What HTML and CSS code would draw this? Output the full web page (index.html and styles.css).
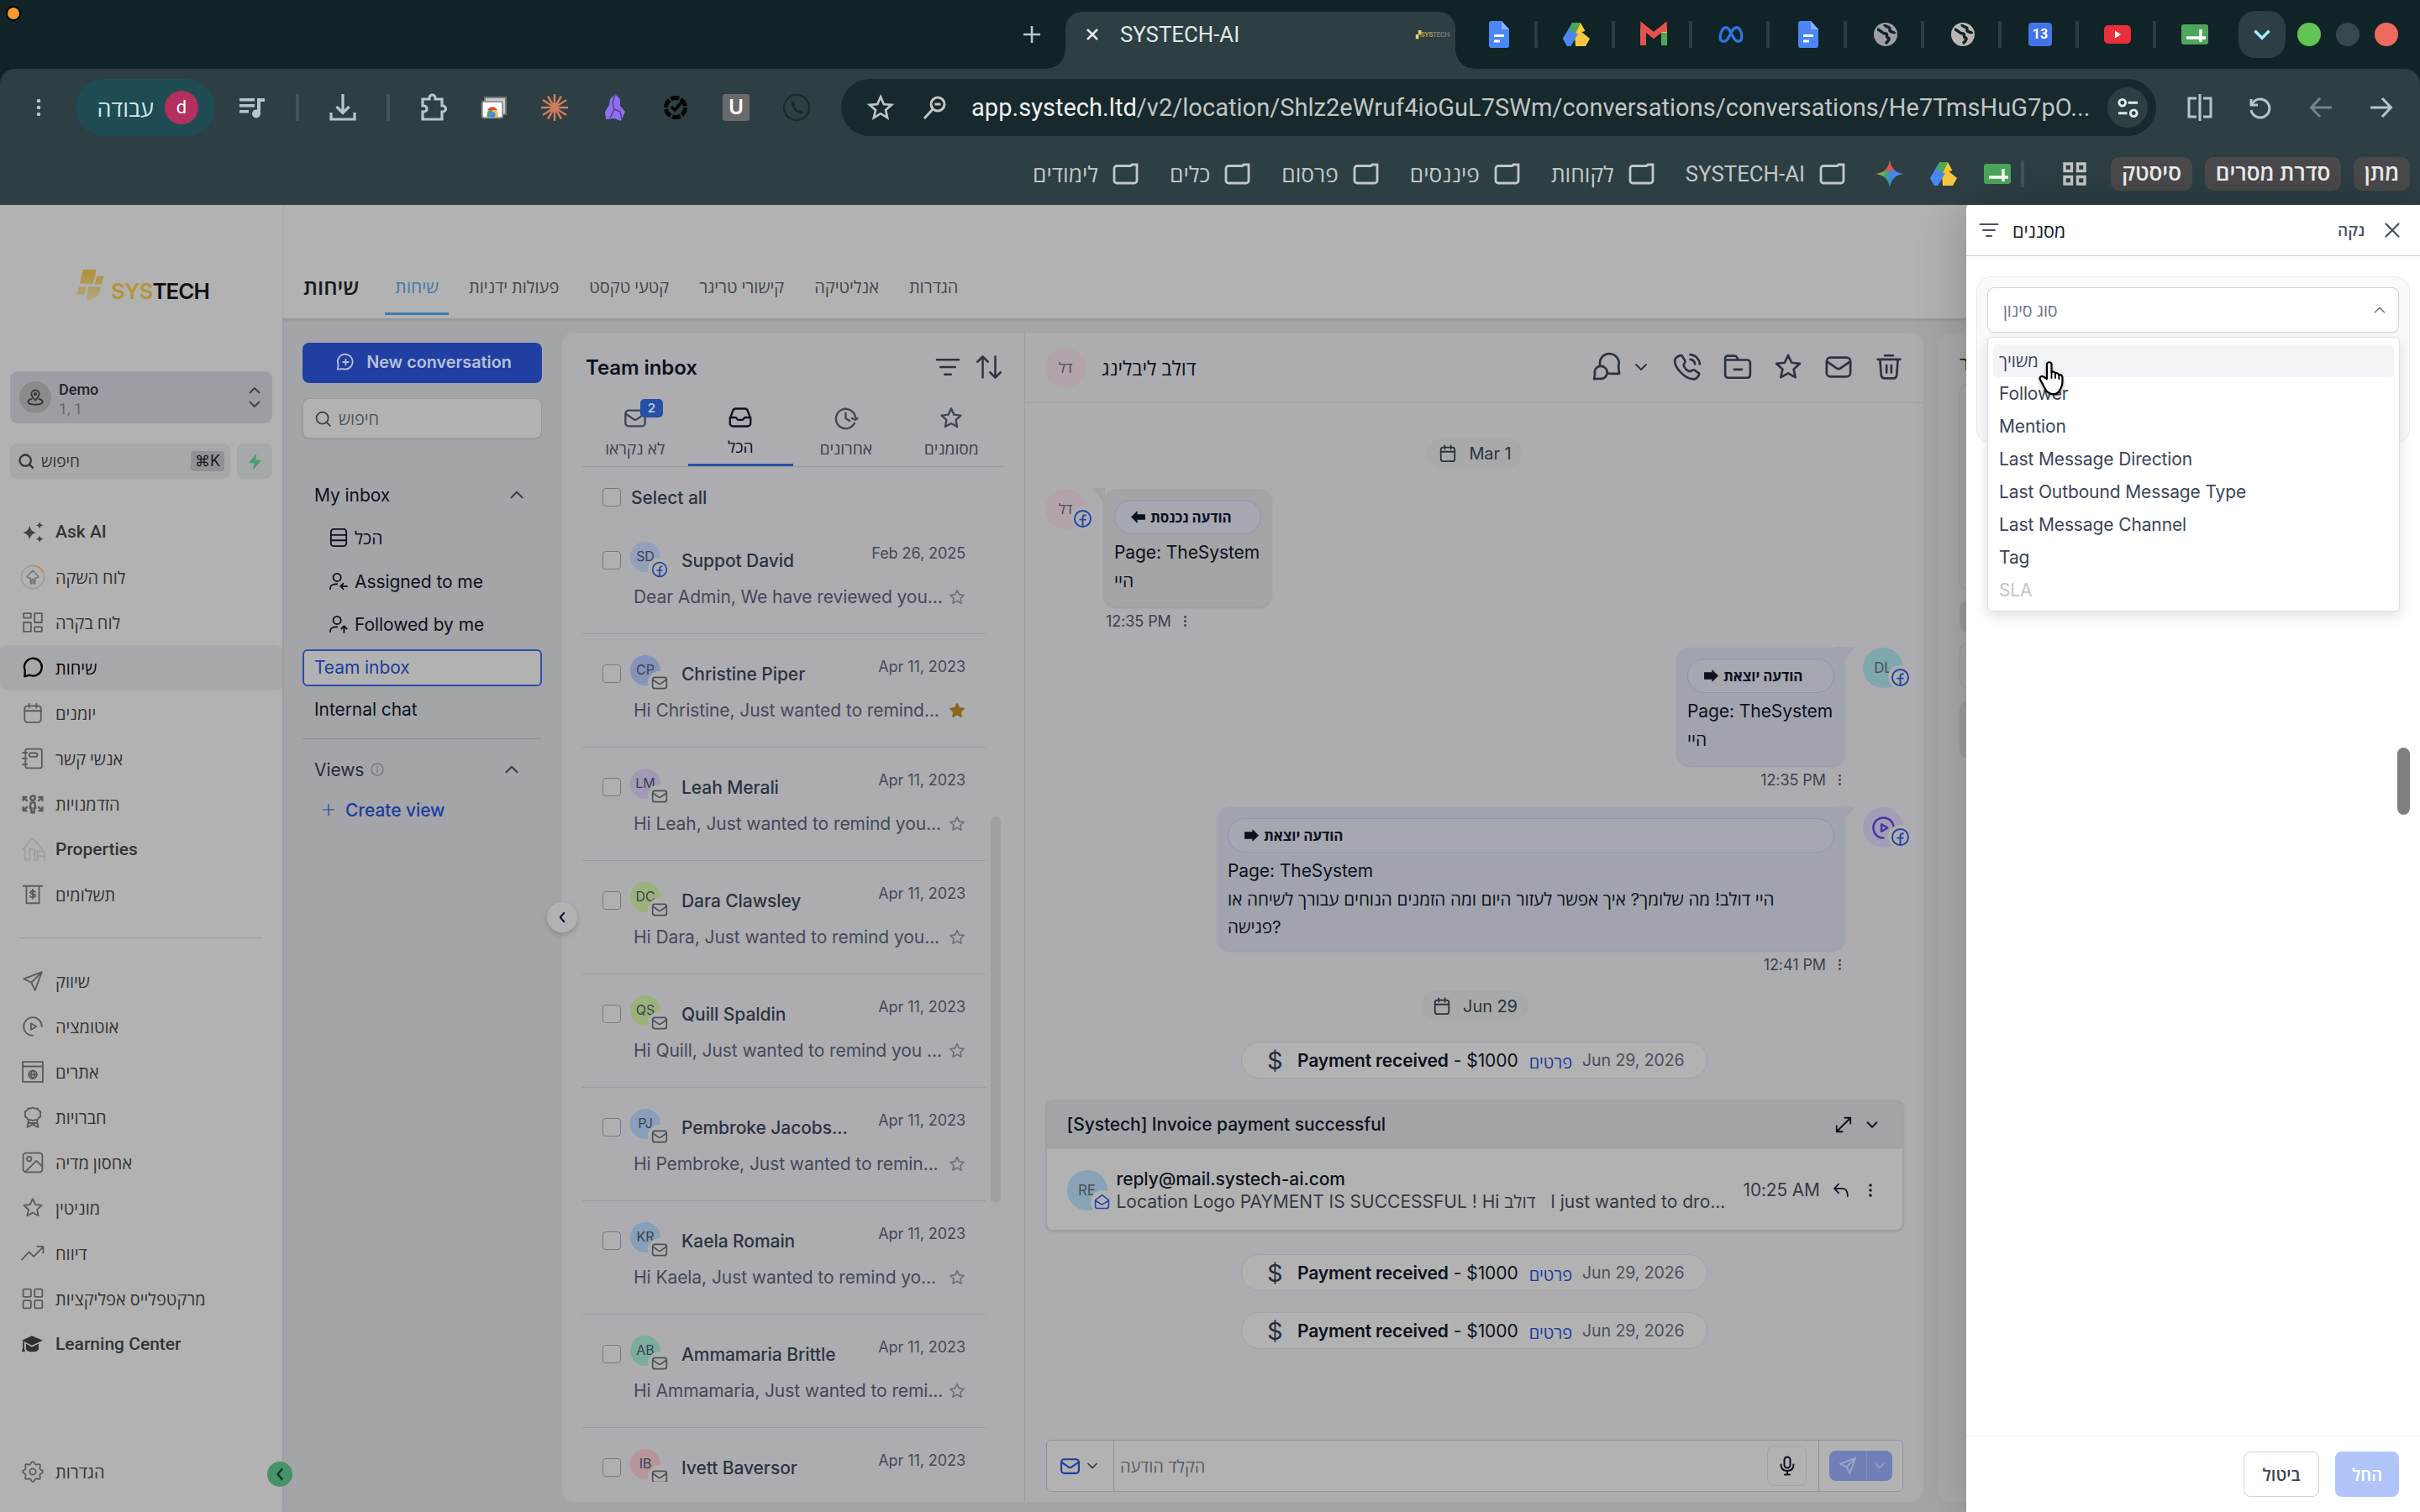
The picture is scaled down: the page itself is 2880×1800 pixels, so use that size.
FILE: index.html
```html
<!DOCTYPE html>
<html lang="he">
<head>
<meta charset="utf-8">
<title>SYSTECH-AI</title>
<link rel="stylesheet" href="styles.css">
</head>
<body>
<svg class="sprite" width="0" height="0">
  <defs>
    <linearGradient id="gold" x1="0" y1="0" x2="0" y2="1"><stop offset="0" stop-color="#b08f2f"/><stop offset="1" stop-color="#b2a987"/></linearGradient>
    <linearGradient id="gem" x1="0" y1="0" x2="1" y2="0"><stop offset="0" stop-color="#f2c230"/><stop offset=".35" stop-color="#3fa76a"/><stop offset=".6" stop-color="#4285f4"/><stop offset="1" stop-color="#4a8af4"/></linearGradient>
  </defs>
  <symbol id="i-mail" viewBox="0 0 24 24"><rect x="2" y="4" width="20" height="16" rx="3.2"/><path d="M2.5 7.5 10.4 13c1 .7 2.200.7 3.200 0L21.500 7.500"/></symbol>
  <symbol id="i-star" viewBox="0 0 24 24"><path d="M12 2l2.900 6.300 6.900.8-5.100 4.700 1.400 6.800L12 17.200l-6.100 3.400 1.400-6.800L2.200 9.100l6.900-.8z"/></symbol>
  <symbol id="i-down" viewBox="0 0 24 24"><path d="M6 9l6 6 6-6"/></symbol>
  <symbol id="i-up" viewBox="0 0 24 24"><path d="M6 15l6-6 6 6"/></symbol>
  <symbol id="i-left" viewBox="0 0 24 24"><path d="M15 5l-6 7 6 7"/></symbol>
  <symbol id="i-search" viewBox="0 0 24 24"><circle cx="11" cy="11" r="8"/><path d="M17 17l4.500 4.500"/></symbol>
  <symbol id="i-cal" viewBox="0 0 24 24"><rect x="3" y="4" width="18" height="18" rx="3"/><path d="M3 9.500h18M8 1.500V6M16 1.500V6"/></symbol>
  <symbol id="i-send" viewBox="0 0 24 24"><path d="M22 2 2 9.500l8.500 4L14.500 22zM22 2 10.500 13.500"/></symbol>
  <symbol id="i-filter" viewBox="0 0 24 24"><path d="M1.500 5h21M5 12h14M9 19h6"/></symbol>
  <symbol id="i-dots" viewBox="0 0 24 24"><g fill="currentColor" stroke="none"><circle cx="12" cy="4" r="2.300"/><circle cx="12" cy="12" r="2.300"/><circle cx="12" cy="20" r="2.300"/></g></symbol>
  <symbol id="i-fb" viewBox="0 0 24 24"><circle cx="12" cy="12" r="10"/><path d="M12 21.500V10.500c0-2 1-3 3.500-3M8.500 13.200h7"/></symbol>
  <symbol id="i-play" viewBox="0 0 24 24"><path d="M12 22a10 10 0 1 1 10-10"/><path d="M10 8.500v7l6-3.500z"/></symbol>
  <symbol id="i-chat" viewBox="0 0 24 24"><path d="M3 21.500l.6-6.300A9.600 9.600 0 1 1 8.500 20z"/></symbol>
  <symbol id="i-folder" viewBox="0 0 32 26"><path d="M5 3.500h13l3.500 0 1.500-1.500h6v19a3 3 0 0 1-3 3H5a3 3 0 0 1-3-3V6.500a3 3 0 0 1 3-3z"/></symbol>
  <symbol id="i-doc" viewBox="0 0 24 32"><path d="M3 0h12l9 10v19a3 3 0 0 1-3 3H3a3 3 0 0 1-3-3V3a3 3 0 0 1 3-3z" fill="#4c86f5"/><path d="M15 0l9 10h-9z" fill="#8ab4f8"/><path d="M6 17.500h12M6 24h7" stroke="#fff" stroke-width="3"/></symbol>
  <symbol id="i-drive" viewBox="0 0 32 28"><path d="M11 0h10l5.500 10-10.500 3-5 1z" fill="#fbc934"/><path d="M11 0h10l-4 9-6 5-3-4.500z" fill="#4caf50"/><path d="M11 0 0 19l5 9 11-17z" fill="#4c86f5"/><path d="M11 0h10L15 13 7.500 9z" fill="#4ba75a"/><path d="M21 10 32 19l-5 9H15l-1-12 5-8z" fill="#f7c744"/><path d="M10 13h8L9.500 28H5L0 19l3.500-6z" fill="#4c86f5"/></symbol>
  <symbol id="i-globe" viewBox="0 0 28 28"><circle cx="14" cy="14" r="14" fill="currentColor"/><path d="M4 8c4 0 5 5 10 5 3 0 0 4 3 5s-1 5-3 7M13 2c0 4 7 2 6 6s5 2 6 5" fill="none" stroke="#102327" stroke-width="3.500"/></symbol>
  <symbol id="i-sheet" viewBox="0 0 32 24"><rect width="32" height="24" rx="3" fill="#4da65c"/><path d="M6 16h23M23 6v15" stroke="#fff" stroke-width="3.400"/></symbol>
  <symbol id="i-in" viewBox="0 0 18 16"><path d="M0 8l8-8v4.500h10v7H8V16z" fill="currentColor" stroke="none"/></symbol>
  <symbol id="i-out" viewBox="0 0 18 16"><path d="M18 8l-8-8v3.500H0v9h10V16z" fill="currentColor" stroke="none"/></symbol>
</svg>

<header class="browser">
  <div class="tabstrip">
    <i class="rec"></i>
    <svg class="newtab" viewBox="0 0 24 24"><path d="M12 1v22M1 12h22"/></svg>
    <div class="tab"><svg viewBox="0 0 24 24"><path d="M4 4l16 16M20 4 4 20"/></svg><span>SYSTECH-AI</span><em><b>▞</b>SYS<u>TECH</u></em></div>
    <div class="pins">
      <div><svg class="doc"><use href="#i-doc"/></svg></div>
      <div><svg class="drv"><use href="#i-drive"/></svg></div>
      <div><svg class="gm" viewBox="0 0 32 25"><path d="M3.500 25V5" stroke="#4c86f5" stroke-width="7"/><path d="M28.500 25V5" stroke="#4ba75a" stroke-width="7"/><path d="M28.500 10V5" stroke="#f7c744" stroke-width="7"/><path d="M3.500 25V3L16 13 28.500 3v6" fill="none" stroke="#e8504a" stroke-width="6.500"/></svg></div>
      <div><svg class="meta" viewBox="0 0 34 24"><path d="M3 17C3 8 7 3 10.500 3 17 3 19 21 26 21c3 0 5-2 5-6C31 8 28 3 24 3 17 3 15 21 8 21c-3 0-5-1.500-5-4z" fill="none" stroke="#2f74e0" stroke-width="3.600"/></svg></div>
      <div><svg class="doc"><use href="#i-doc"/></svg></div>
      <div><svg class="glb g1"><use href="#i-globe"/></svg></div>
      <div><svg class="glb g2"><use href="#i-globe"/></svg></div>
      <div><b class="cal13">13</b></div>
      <div><svg class="yt" viewBox="0 0 32 22"><rect width="32" height="22" rx="5" fill="#e7303c"/><path d="M13 6.500v9l7-4.500z" fill="#fff"/></svg></div>
      <div><svg class="sht"><use href="#i-sheet"/></svg></div>
    </div>
    <div class="tabsearch"><svg><use href="#i-down"/></svg></div>
    <i class="light l1"></i><i class="light l2"></i><i class="light l3"></i>
  </div>
  <div class="toolbar">
    <svg class="menu"><use href="#i-dots"/></svg>
    <div class="profile"><span>עבודה</span><b>d</b></div>
    <div class="tools">
      <svg viewBox="0 0 32 32" class="f"><path d="M1 5h18v3.500H1zM1 12h18v3.500H1zM1 19h11v3.500H1zM22 5h9v4h-5v14a5 5 0 1 1-4-4.500z"/></svg>
      <i></i>
      <svg viewBox="0 0 32 32"><path d="M16 0v22M8.500 15l7.500 7.500 7.500-7.500M2 22v8h28v-8"/></svg>
      <i></i>
      <svg viewBox="0 0 32 32"><path d="M3 6h8V4.500a3.500 3.500 0 0 1 7 0V6h8v8h1a3.500 3.500 0 0 1 0 7h-1v9H3v-9h1.500a3.500 3.500 0 0 0 0-7H3z"/></svg>
      <svg viewBox="0 0 32 32"><rect x="5" y="4" width="25" height="20" fill="#c9c9c9" stroke="#777" stroke-width="2"/><rect x="2" y="9" width="24" height="19" rx="2" fill="#fff" stroke="#999" stroke-width="2"/><path d="M14 16v11H7.500c0-6 2-10 6.500-11z" fill="#4ba75a" stroke="none"/><path d="M14 16c5 0 7 5 7 11h-7z" fill="#f7c744" stroke="none"/><path d="M8 19c3-5 9-5 12 0z" fill="#de4b3e" stroke="none"/><circle cx="14" cy="24.500" r="3.500" fill="#4c86f5" stroke="none"/></svg>
      <svg viewBox="0 0 32 32"><path d="M16 0v32M0 16h32M8 2.500l16 27M24 2.500 8 29.500M2 7l28 18M30 7 2 25" stroke="#cf7d5d" stroke-width="2.500"/></svg>
      <svg viewBox="0 0 32 32"><path d="M16 0l6 6v8l6 7-5 11-8-3-10 1-1-9 5-8 1-7z" fill="#8f6ff0" stroke="none"/><path d="M16 1c-3 8-4 10-1 17l-5 10M15 18l7 3 2 9" stroke="#4e3f94" stroke-width="1.500"/></svg>
      <svg viewBox="0 0 32 32"><circle cx="16" cy="16" r="11.500" stroke="#050505" stroke-width="5" stroke-dasharray="10 2"/><path d="M11 15l4 4 8-9" stroke="#050505" stroke-width="3.500"/></svg>
      <b class="ubox">U</b>
      <svg viewBox="0 0 32 32"><circle cx="16" cy="16" r="15" stroke="#1b2628" stroke-width="2"/><path d="M11 8c-3 2 0 9 4 12.500s8 4 8.500 1.500l-3-3-3 1-4.500-6 1.500-3z" fill="#1b2628" stroke="none"/></svg>
    </div>
    <div class="omnibox">
      <svg viewBox="0 0 24 24" class="ob1"><path d="M12 2.500l2.800 6.500 7 .6-5.300 4.600 1.600 6.900L12 17.400l-6.100 3.700 1.600-6.900L2.200 9.600l7-.6z"/></svg>
      <svg viewBox="0 0 30 30" class="ob2"><circle cx="18" cy="11" r="8"/><path d="M12 17 2 28M14.500 11h7"/></svg>
      <span class="url"><b>app.systech.ltd</b>/v2/location/Shlz2eWruf4ioGuL7SWm/conversations/conversations/He7TmsHuG7pO...</span>
      <div class="site"><svg viewBox="0 0 28 28"><circle cx="7" cy="7.500" r="4"/><path d="M14 7.500h12M2 20.500h11"/><circle cx="21" cy="20.500" r="4"/></svg></div>
    </div>
    <div class="navs">
      <svg viewBox="0 0 32 32"><path d="M12 5H3v22h9M20 5h9v22h-9" stroke-width="3"/><path d="M16 0v32" stroke-width="3"/></svg>
      <svg viewBox="0 0 28 28"><path d="M3 4v7h8M4 10a11 11 0 1 1-1 7"/></svg>
      <svg viewBox="0 0 28 28" class="off"><path d="M27 14H3M13 3 2.500 14 13 25"/></svg>
      <svg viewBox="0 0 28 28"><path d="M1 14h24M15 3l10.500 11L15 25"/></svg>
    </div>
  </div>
  <div class="bookmarks">
    <div class="bm"><span>לימודים</span><svg><use href="#i-folder"/></svg></div>
    <div class="bm"><span>כלים</span><svg><use href="#i-folder"/></svg></div>
    <div class="bm"><span>פרסום</span><svg><use href="#i-folder"/></svg></div>
    <div class="bm"><span>פיננסים</span><svg><use href="#i-folder"/></svg></div>
    <div class="bm"><span>לקוחות</span><svg><use href="#i-folder"/></svg></div>
    <div class="bm en"><span>SYSTECH-AI</span><svg><use href="#i-folder"/></svg></div>
    <svg class="gemini" viewBox="0 0 32 32"><path d="M16 0c1.500 9 6.500 14.500 16 16-9.500 1.500-14.500 7-16 16C14.500 23 9.500 17.500 0 16 9.500 14.500 14.500 9 16 0z" fill="url(#gem)"/><path d="M16 0c1.200 7 4 11 8 13.500-6-2-10-2-16 0C12 11 14.800 7 16 0z" fill="#e8504a"/></svg>
    <svg class="drv"><use href="#i-drive"/></svg>
    <svg class="sht"><use href="#i-sheet"/></svg>
    <i class="sep"></i>
    <svg class="grid4" viewBox="0 0 28 28"><path d="M2 2h8.500v8.500H2zM17.500 2H26v8.500h-8.500zM2 17.500h8.500V26H2zM17.500 17.500H26V26h-8.500z"/></svg>
    <b class="chip c1">סיסטק</b><b class="chip c2">סדרת מסרים</b><b class="chip c3">מתן</b>
  </div>
</header>

<div class="app">
  <aside class="side">
    <div class="logo"><svg viewBox="0 0 34 40"><path d="M8 0h17l-4 18H4zM25 8h9l-3 11h-9zM3 21h9l-2 11H0zM14 21h17l-4 12-15 7z" fill="url(#gold)"/></svg><span><b>SYS</b>TECH</span></div>
    <div class="acct">
      <i><svg viewBox="0 0 24 24"><path d="M12 16c-3-3-5-5.500-5-8.300a5 5 0 0 1 10 0C17 10.500 15 13 12 16zM7 14c-3 1-4.500 2-4.500 3.500 0 2.500 4 4 9.500 4s9.500-1.500 9.500-4C21.500 16 20 15 17 14"/><circle cx="12" cy="7.700" r="1.300"/></svg></i>
      <div><b>Demo</b><span>1, 1</span></div>
      <svg class="updn" viewBox="0 0 16 28"><path d="M2.500 8.500 8 3l5.500 5.500M2.500 19.500 8 25l5.500-5.500"/></svg>
    </div>
    <div class="srow">
      <div class="sbox"><svg><use href="#i-search"/></svg><span>חיפוש</span><kbd>⌘K</kbd></div>
      <div class="bolt"><svg viewBox="0 0 24 24"><path d="M14 1 3 14h8l-1.500 9L21 10h-8z" fill="#45a06f"/></svg></div>
    </div>
    <nav class="menu1">
      <a class="en"><svg viewBox="0 0 24 24" class="fill"><path d="M8.500 5c1 5 3 6.800 7.500 8-4.500 1.200-6.500 3-7.500 8-1-5-3-6.800-7.500-8 4.500-1.200 6.500-3 7.500-8zM19.500 1c.5 2.500 1.500 3.500 4 4-2.500.5-3.500 1.500-4 4-.5-2.500-1.500-3.500-4-4 2.500-.5 3.500-1.500 4-4zM19.500 16c.5 2.500 1.500 3.500 4 4-2.500.5-3.500 1.500-4 4-.5-2.500-1.500-3.500-4-4 2.500-.5 3.500-1.500 4-4z"/></svg>Ask AI</a>
      <a><svg viewBox="0 0 28 28" class="ring"><circle cx="14" cy="14" r="12.700" stroke="#9a9b9e" stroke-width="1.500"/><path d="M14 1.300A12.700 12.700 0 0 1 25.500 8.500" stroke="#c08a60" stroke-width="1.800"/><path d="M14 6.500l6.500 7-2 1.500h-2v6.500H15v-5h-2v5h-1.500V15h-2l-2-1.500z" stroke="#77787b" stroke-width="1.500"/></svg>לוח השקה</a>
      <a><svg viewBox="0 0 24 24" class="sq"><path d="M2 2h8v5H2zM14 2h8v10h-8zM2 12h8v10H2zM14 17h8v5h-8z"/></svg>לוח בקרה</a>
      <a class="on"><svg><use href="#i-chat"/></svg>שיחות</a>
      <a><svg><use href="#i-cal"/></svg>יומנים</a>
      <a><svg viewBox="0 0 24 24"><rect x="4" y="1.500" width="18" height="21" rx="2"/><rect x="8" y="6" width="9" height="4" rx="2"/><path d="M1 5.500h4.500M1 12h4.500M1 18.500h4.500"/></svg>אנשי קשר</a>
      <a><svg viewBox="0 0 24 24" class="bold"><circle cx="12" cy="5.500" r="2.500"/><path d="M10 10.500h4l1 6h-1.500v5h-3v-5H9zM1.500 8V4.500H5M1.500 4.500l4 4M22.500 8V4.500H19M22.500 4.500l-4 4M1.500 16v3.500H5M1.500 19.500l4-4M22.500 16v3.500H19M22.500 19.500l-4-4"/></svg>הזדמנויות</a>
      <a class="en"><svg viewBox="0 0 24 24" class="faint"><path d="M1 12 11 1l10 11M3 10v13h5V12h5v11h3M16 23V14h7v9M16 19h7"/></svg>Properties</a>
      <a><svg viewBox="0 0 24 24"><path d="M1.500 2.500h21M5 2.500v19h14v-19" /><path d="M14.500 9c-.5-1.500-5-1.500-5 .6 0 2.400 5.200 1 5.200 3.600 0 2.300-5 2.300-5.500.4M12 6.500v10"/></svg>תשלומים</a>
    </nav>
    <hr>
    <nav class="menu1">
      <a><svg><use href="#i-send"/></svg>שיווק</a>
      <a><svg><use href="#i-play"/></svg>אוטומציה</a>
      <a><svg viewBox="0 0 24 24"><path d="M1 1h22v22H1zM1 6h22"/><circle cx="12" cy="15" r="4.500"/><path d="M7.500 15h9M12 10.500c-3 3-3 6 0 9 3-3 3-6 0-9"/></svg>אתרים</a>
      <a><svg viewBox="0 0 24 24"><path d="M12 1.500l2.500 1 2.600-.2 1.300 2.300 2.200 1.500-.4 2.600.4 2.600-2.200 1.500-1.300 2.300-2.600-.2-2.500 1-2.500-1-2.600.2-1.300-2.300-2.200-1.500.4-2.600-.4-2.600 2.200-1.500 1.300-2.300 2.600.2z"/><path d="M7.500 15l-1.500 8 6-3 6 3-1.500-8M8 18.500h8"/></svg>חברויות</a>
      <a><svg viewBox="0 0 24 24"><rect x="1.500" y="1.500" width="21" height="21" rx="3"/><circle cx="8" cy="8" r="2.500"/><path d="M4 22l12-12 6.500 6.500"/></svg>אחסון מדיה</a>
      <a><svg><use href="#i-star"/></svg>מוניטין</a>
      <a><svg viewBox="0 0 24 24"><path d="M0 19l8-8.500 5 5L23.500 5M17 4.500h6.500v7"/></svg>דיווח</a>
      <a><svg viewBox="0 0 24 24"><rect x="1.500" y="1.500" width="8.500" height="8.500" rx="1.500"/><rect x="14" y="1.500" width="8.500" height="8.500" rx="1.500"/><rect x="1.500" y="14" width="8.500" height="8.500" rx="1.500"/><rect x="14" y="14" width="8.500" height="8.500" rx="1.500"/></svg>מרקטפלייס אפליקציות</a>
      <a class="en"><svg viewBox="0 0 24 24" class="fill dark"><path d="M11 3 0 8l11 5.500L23 8zM4.500 11.500V18c2 3.500 12 3.500 14 0v-6.500L11 15.500zM1 8.500h1.700L2.500 16l1 4.500H0L1 16z"/></svg>Learning Center</a>
    </nav>
    <nav class="menu1 last">
      <a><svg viewBox="0 0 24 24"><circle cx="12" cy="12" r="3.300"/><path d="M12 1c2 0 1.700 2.600 3.200 3.200S18.400 3 19.800 4.200s-.6 3-.1 4.500S23 10 23 12s-2.600 1.700-3.200 3.200 1.200 3.200 0 4.600-3-.6-4.500-.1S14 23 12 23s-1.700-2.600-3.200-3.200-3.200 1.200-4.600 0 .6-3 .1-4.500S1 14 1 12s2.600-1.700 3.200-3.200S3 5.600 4.200 4.200s3 .6 4.500.1S10 1 12 1z"/></svg>הגדרות</a>
    </nav>
    <div class="fold"><svg><use href="#i-left"/></svg></div>
  </aside>

  <main class="main">
    <div class="top"><h1>שיחות</h1><a class="on">שיחות</a><a>פעולות ידניות</a><a>קטעי טקסט</a><a>קישורי טריגר</a><a>אנליטיקה</a><a>הגדרות</a></div>
    <div class="cols">
      <section class="boxes">
        <button class="newc"><svg viewBox="0 0 24 24"><path d="M2 21.500l.8-6A9.700 9.700 0 1 1 8.500 20.800zM12.500 8.500v7M9 12h7"/></svg>New conversation</button>
        <div class="find"><svg><use href="#i-search"/></svg>חיפוש</div>
        <div class="grp">My inbox<svg><use href="#i-up"/></svg></div>
        <a class="sub heb"><svg viewBox="0 0 24 24"><rect x="2" y="1" width="20" height="22" rx="3.500"/><path d="M2 8.500h20M2 15.500h20"/></svg>הכל</a>
        <a class="sub"><svg viewBox="0 0 24 24"><circle cx="10" cy="7" r="5"/><path d="M1 22c0-5 2.500-6.500 9-6.500M23 18.500h-8M18 15l-3.500 3.500L18 22"/></svg>Assigned to me</a>
        <a class="sub"><svg viewBox="0 0 24 24"><circle cx="10" cy="7" r="5"/><path d="M1 22c0-5 2.500-6.500 9-6.500M19 23v-8M15.500 18l3.500-3.500 3.500 3.500"/></svg>Followed by me</a>
        <a class="team">Team inbox</a>
        <a class="internal">Internal chat</a>
        <hr>
        <div class="grp views">Views<svg class="info" viewBox="0 0 24 24"><circle cx="12" cy="12" r="10.500"/><path d="M12 11v6M12 7v1.500"/></svg><svg><use href="#i-up"/></svg></div>
        <a class="create"><svg viewBox="0 0 24 24"><path d="M12 1v22M1 12h22"/></svg>Create view</a>
      </section>

      <section class="list">
        <div class="lhead"><h2>Team inbox</h2><svg><use href="#i-filter"/></svg><svg viewBox="0 0 24 24"><path d="M6 22V2M1 7l5-5 5 5M18 2v20M13 17l5 5 5-5"/></svg></div>
        <div class="ltabs">
          <div><svg><use href="#i-mail"/></svg><b>2</b><span>לא נקראו</span></div>
          <div class="on"><svg viewBox="0 0 24 24"><path d="M1.500 13 4.500 5a3 3 0 0 1 3-2h9a3 3 0 0 1 3 2l3 8v5a3 3 0 0 1-3 3h-15a3 3 0 0 1-3-3zM1.500 12h5.500c1.500 0 1.500 2.500 3 2.500h4c1.500 0 1.500-2.500 3-2.500h5.500"/></svg><span>הכל</span></div>
          <div><svg viewBox="0 0 24 24"><path d="M20.500 17A10 10 0 1 1 21.500 11M18 12l3.200 1.500L23.500 12M11.500 6.500V12l4 2.500"/></svg><span>אחרונים</span></div>
          <div><svg><use href="#i-star"/></svg><span>מסומנים</span></div>
        </div>
        <div class="rows">
          <div class="all"><i class="cb"></i><span>Select all</span></div>
          <div class="row"><i class="cb"></i><div class="av a1">SD<em class="fb"><svg><use href="#i-fb"/></svg></em></div><b>Suppot David</b><time>Feb 26, 2025</time><p>Dear Admin, We have reviewed you...</p><svg class="st"><use href="#i-star"/></svg></div>
          <div class="row"><i class="cb"></i><div class="av a2">CP<em><svg><use href="#i-mail"/></svg></em></div><b>Christine Piper</b><time>Apr 11, 2023</time><p>Hi Christine, Just wanted to remind...</p><svg class="st full"><use href="#i-star"/></svg></div>
          <div class="row"><i class="cb"></i><div class="av a3">LM<em><svg><use href="#i-mail"/></svg></em></div><b>Leah Merali</b><time>Apr 11, 2023</time><p>Hi Leah, Just wanted to remind you...</p><svg class="st"><use href="#i-star"/></svg></div>
          <div class="row"><i class="cb"></i><div class="av a4">DC<em><svg><use href="#i-mail"/></svg></em></div><b>Dara Clawsley</b><time>Apr 11, 2023</time><p>Hi Dara, Just wanted to remind you...</p><svg class="st"><use href="#i-star"/></svg></div>
          <div class="row"><i class="cb"></i><div class="av a4">QS<em><svg><use href="#i-mail"/></svg></em></div><b>Quill Spaldin</b><time>Apr 11, 2023</time><p>Hi Quill, Just wanted to remind you ...</p><svg class="st"><use href="#i-star"/></svg></div>
          <div class="row"><i class="cb"></i><div class="av a5">PJ<em><svg><use href="#i-mail"/></svg></em></div><b>Pembroke Jacobs...</b><time>Apr 11, 2023</time><p>Hi Pembroke, Just wanted to remin...</p><svg class="st"><use href="#i-star"/></svg></div>
          <div class="row"><i class="cb"></i><div class="av a5">KR<em><svg><use href="#i-mail"/></svg></em></div><b>Kaela Romain</b><time>Apr 11, 2023</time><p>Hi Kaela, Just wanted to remind yo...</p><svg class="st"><use href="#i-star"/></svg></div>
          <div class="row"><i class="cb"></i><div class="av a6">AB<em><svg><use href="#i-mail"/></svg></em></div><b>Ammamaria Brittle</b><time>Apr 11, 2023</time><p>Hi Ammamaria, Just wanted to remi...</p><svg class="st"><use href="#i-star"/></svg></div>
          <div class="row"><i class="cb"></i><div class="av a7">IB<em><svg><use href="#i-mail"/></svg></em></div><b>Ivett Baversor</b><time>Apr 11, 2023</time></div>
          <i class="thumb"></i>
        </div>
        <div class="collapse"><svg><use href="#i-left"/></svg></div>
      </section>

      <section class="chat">
        <div class="chead">
          <div class="cav">דל</div><h3>דולב ליבלינג</h3>
          <div class="acts">
            <svg viewBox="0 0 24 24"><path d="M6.500 10.500a8 8 0 1 1 15.500.5c0 2 .2 4 .7 6.500H16l-3-.2"/><path d="M1.500 22l.6-4a5.300 5.300 0 1 1 4 3.700z"/></svg>
            <svg class="sm"><use href="#i-down"/></svg>
            <svg viewBox="0 0 24 24"><path d="M14.500 1.500c4.500.4 7.500 3.500 8 8M14.500 5.500c2.300.3 3.700 1.700 4 4M7.600 2.600l2.600 4.200c.6 1-1.500 2.800-1.200 3.800.8 2.500 2.500 4.200 5 5 1 .3 2.800-1.800 3.800-1.200l4 2.800c1 .8-1.800 5-4.500 5C10 22 1.500 13 1.500 6.500c0-2.700 5-5.200 6.100-3.900z"/></svg>
            <svg viewBox="0 0 24 24"><path d="M1.500 6V4.500a2 2 0 0 1 2-2h6c1 0 1.500.5 2 1.500l1 2h7.500a2.500 2.500 0 0 1 2.500 2.500v10a2.500 2.500 0 0 1-2.500 2.500h-16a2.500 2.500 0 0 1-2.500-2.500V6h11M9 14h6.500"/></svg>
            <svg><use href="#i-star"/></svg>
            <svg class="ml"><use href="#i-mail"/></svg>
            <svg viewBox="0 0 24 24"><path d="M2.500 5.500h19M8.500 2.300h7M4.500 5.500l1 13.500a3 3 0 0 0 3 2.500h7a3 3 0 0 0 3-2.500l1-13.500M10 10.500v6M14 10.500v6"/></svg>
          </div>
        </div>
        <div class="feed">
          <div class="day d1"><svg><use href="#i-cal"/></svg>Mar 1</div>
          <div class="msg in">
            <div class="cav">דל<em><svg><use href="#i-fb"/></svg></em></div>
            <div class="wrap"><div class="bub"><div class="pill"><svg><use href="#i-in"/></svg>הודעה נכנסת</div><p>Page: TheSystem</p><p class="h">היי</p></div><div class="tm">12:35 PM<svg><use href="#i-dots"/></svg></div></div>
          </div>
          <div class="msg out m2">
            <div class="wrap"><div class="bub"><div class="pill"><svg><use href="#i-out"/></svg>הודעה יוצאת</div><p>Page: TheSystem</p><p class="h">היי</p></div><div class="tm">12:35 PM<svg><use href="#i-dots"/></svg></div></div>
            <div class="cav dl">DL<em><svg><use href="#i-fb"/></svg></em></div>
          </div>
          <div class="msg out m3">
            <div class="wrap"><div class="bub"><div class="pill"><svg><use href="#i-out"/></svg>הודעה יוצאת</div><p>Page: TheSystem</p><p class="h long">היי דולב! מה שלומך? איך אפשר לעזור היום ומה הזמנים הנוחים עבורך לשיחה או<br>פגישה?</p></div><div class="tm">12:41 PM<svg><use href="#i-dots"/></svg></div></div>
            <div class="cav bot"><svg><use href="#i-play"/></svg><em><svg><use href="#i-fb"/></svg></em></div>
          </div>
          <div class="day d2"><svg><use href="#i-cal"/></svg>Jun 29</div>
          <div class="pay p1"><i>$</i><b>Payment received</b> <span>- $1000</span><a>פרטים</a><time>Jun 29, 2026</time></div>
          <div class="mailcard">
            <div class="mh"><b>[Systech] Invoice payment successful</b><svg viewBox="0 0 24 24"><path d="M3 21 21 3M13.500 3H21v7.500M3 13.500V21h7.500"/></svg><svg><use href="#i-down"/></svg></div>
            <div class="mb"><div class="cav re">RE<em><svg viewBox="0 0 24 24"><path d="M2 9.500 12 2l10 7.500V19a3 3 0 0 1-3 3H5a3 3 0 0 1-3-3zM3 11l9 5.500 9-5.500"/></svg></em></div><div class="mt"><b>reply@mail.systech-ai.com</b><span>Location Logo PAYMENT IS SUCCESSFUL ! Hi דולב &nbsp; I just wanted to dro...</span></div><time>10:25 AM</time><svg class="rp" viewBox="0 0 24 24"><path d="M8.500 3 2.500 9.500l6 6.500M2.500 9.500H14c5 0 7.500 3 7.500 11.500"/></svg><svg class="dt"><use href="#i-dots"/></svg></div>
          </div>
          <div class="pay p2"><i>$</i><b>Payment received</b> <span>- $1000</span><a>פרטים</a><time>Jun 29, 2026</time></div>
          <div class="pay p3"><i>$</i><b>Payment received</b> <span>- $1000</span><a>פרטים</a><time>Jun 29, 2026</time></div>
        </div>
        <div class="composer">
          <div class="ch"><svg><use href="#i-mail"/></svg><svg class="sm"><use href="#i-down"/></svg></div>
          <span>הקלד הודעה</span>
          <div class="mic"><svg viewBox="0 0 24 24"><rect x="8.500" y="1.500" width="7" height="13" rx="3.500"/><path d="M4.500 10.500c0 5 3 7.500 7.500 7.500s7.500-2.500 7.500-7.500M12 18v4M9 22.500h6"/></svg></div>
          <div class="sendw"><div class="send"><svg><use href="#i-send"/></svg><div class="more"><svg class="sm"><use href="#i-down"/></svg></div></div></div>
        </div>
      </section>

      <section class="detail"><h4>ר</h4><i class="k1"></i><i class="k2"></i><i class="k3"></i><i class="k4"></i></section>
    </div>
  </main>

  <aside class="drawer">
    <div class="dh"><svg><use href="#i-filter"/></svg><h3>מסננים</h3><a>נקה</a><svg class="x" viewBox="0 0 24 24"><path d="M2 2l20 20M22 2 2 22"/></svg></div>
    <div class="fcard">
      <div class="sel"><span>סוג סינון</span><svg><use href="#i-up"/></svg></div>
      <ul class="drop"><li class="hov heb">משויך</li><li>Follower</li><li>Mention</li><li>Last Message Direction</li><li>Last Outbound Message Type</li><li>Last Message Channel</li><li>Tag</li><li class="dis">SLA</li></ul>
    </div>
    <i class="dthumb"></i>
    <div class="df"><button>ביטול</button><button class="pri">החל</button></div>
    <svg class="cursor" viewBox="0 0 30 42"><path d="M10 22V4.500a2.800 2.800 0 0 1 5.500 0V14c2-1 4 0 4.500 1.500 2-.8 3.700.2 4.300 1.700 2-.5 4.200.8 4.200 3.500 0 7 0 9-2.500 13.500-2 4.500-4 6-8 6-5 0-8-2-10.500-7L1.800 22.500c-1-3 2.700-5 4.700-2.500z" fill="#fff" stroke="#000" stroke-width="2.200"/><path d="M15.500 14v7M20 16v5M24.300 18v4" stroke="#000" stroke-width="1.800" fill="none"/></svg>
  </aside>
</div>
</body>
</html>
```
FILE: styles.css
```css
*{box-sizing:border-box}
body{margin:0;width:2880px;height:1800px;overflow:hidden;font-family:Inter,"Open Sans",sans-serif;font-size:21px;letter-spacing:-.07px;color:#0d1220;background:#b2b2b2}
svg{display:block;flex:none;fill:none;stroke:currentColor;stroke-width:2;stroke-linecap:round;stroke-linejoin:round;overflow:visible}
.sprite{position:absolute}
h1,h2,h3,h4,p,ul{margin:0;padding:0;font-weight:500}
i,em{font-style:normal}
a{color:inherit}
button{font:inherit;border:0;padding:0}

/* browser chrome */
.browser{height:244px;background:#102327;border-bottom:2px solid #3d4345;color:#c3c8c8;font-family:Roboto,"Open Sans",sans-serif;letter-spacing:0}
.browser svg{stroke-linecap:butt;stroke-linejoin:miter}
.tabstrip{height:82px;display:flex;align-items:center;position:relative}
.rec{width:14px;height:14px;border-radius:50%;background:#f39b2d;box-shadow:0 0 0 2px #000;position:absolute;left:9px;top:9px}
.newtab{width:22px;height:22px;margin-left:1217px;color:#b6c9cc;stroke-width:2.8}
.tab{margin-left:29px;align-self:flex-end;width:464px;height:68px;background:#2d3f43;border-radius:20px 20px 0 0;display:flex;align-items:center;padding:0 14px 14px 23px;position:relative;color:#e3e7e7}
.tab:before,.tab:after{content:"";position:absolute;bottom:0;width:22px;height:22px;background:radial-gradient(circle at 0 0,transparent 21px,#2d3f43 22px)}
.tab:before{left:-22px}
.tab:after{right:-22px;transform:scaleX(-1)}
.tab svg{width:18px;height:18px;stroke-width:3.4}
.tab span{margin-left:24px;font-size:25.800px}
.tab em{margin-left:auto;font:700 8px Inter;color:#b89a3c;width:33px;white-space:nowrap;letter-spacing:-.6px}
.tab em b{color:#e8cf79}
.tab em u{color:#777;text-decoration:none}
.pins{display:flex;margin-left:6px}
.pins div{width:92px;height:32px;display:flex;align-items:center;justify-content:center;border-right:4px solid #2c3d41;padding-left:4px}
.pins div:last-child{border-color:transparent}
.doc{width:24px;height:32px;stroke:none}.drv{width:32px;height:28px;stroke:none}.gm{width:32px;height:25px}.meta{width:34px;height:22px}.glb{width:28px;height:28px;stroke:none}.g1{color:#9d9ea6}.g2{color:#b9b7b3}.yt{width:32px;height:22px;stroke:none}.sht{width:32px;height:24px;stroke:none}
.cal13{width:28px;height:28px;border-radius:4px;background:#4374e8;color:#fff;font-size:16px;line-height:28px;text-align:center}
.tabsearch{width:56px;height:56px;border-radius:20px;background:#2d3f43;color:#a0eefc;display:flex;align-items:center;justify-content:center;margin-left:6px}
.tabsearch svg{width:34px;height:34px;stroke-width:2.4}
.light{width:28px;height:28px;border-radius:50%;margin-left:14px}
.light+.light{margin-left:18px}
.l1{background:#61c454}.l2{background:#36484c}.l3{background:#ed6a5f}
.toolbar{height:90px;background:#2d3f43;border-radius:18px 18px 0 0;display:flex;align-items:center;padding-top:2px;color:#b3c8cb}
.menu{width:24px;height:24px;margin-left:34px}
.profile{margin-left:32px;width:166px;height:68px;border-radius:34px;background:#1f4c53;display:flex;align-items:center;justify-content:flex-end;padding-right:20px;gap:13px;color:#cfe8ec;font-size:27px}
.profile b{width:40px;height:40px;border-radius:50%;background:#b3305e;color:#fff;text-align:center;font-weight:400;line-height:40px;font-size:22px}
.tools{display:flex;align-items:center;margin-left:28px;gap:40px}
.tools svg{width:32px;height:32px;stroke-width:3.2}
.tools .f{fill:currentColor;stroke:none}
.tools i{width:4px;height:32px;background:#41555a;margin:0 -4px}
.tools .ubox{width:32px;height:32px;background:#6a6a6a;color:#fff;text-align:center;font:600 24px/32px Inter;border-radius:3px}
.omnibox{margin-left:37px;width:1565px;height:68px;border-radius:34px;background:#17292c;display:flex;align-items:center;color:#c1c5c4}
.ob1{width:32px;height:32px;margin-left:31px;stroke-width:2}
.ob2{width:30px;height:30px;margin-left:34px;stroke-width:3}
.url{margin-left:28px;width:1331px;font-size:29px;letter-spacing:.04px;white-space:nowrap}
.url b{font-weight:400;color:#eef0f0}
.site{width:48px;height:48px;border-radius:50%;background:#2d3f43;margin-left:21px;display:flex;align-items:center;justify-content:center;color:#e3e7e7}
.site svg{width:27px;height:27px;stroke-width:3}
.navs{display:flex;margin-left:36px;gap:44px;align-items:center}
.navs svg{width:28px;height:28px;stroke-width:3}
.navs svg:first-child{width:32px;height:32px;margin-right:-2px}
.navs .off{color:#71858a}
.bookmarks{height:70px;background:#2d3f43;display:flex;align-items:center;justify-content:flex-end;padding-right:12px;color:#c3c6c6;font-size:26.300px}
.bm{display:flex;align-items:center;gap:17px;margin-right:36px}
.bm.en{font-size:25.800px}
.bm svg{width:32px;height:26px;stroke-width:2.800}
.gemini{width:32px;height:32px;stroke:none;margin-left:0}
.bookmarks .drv{margin-left:32px}.bookmarks .sht{margin-left:32px}
.sep{width:4px;height:32px;background:#41555a;margin-left:12px}
.grid4{width:28px;height:28px;margin:0 29px 0 46px;stroke-width:3.4}
.chip{height:40px;border-radius:10px;background:#4a4a4c;color:#eee;text-align:center;line-height:38px;font-weight:600;font-size:26px;margin-left:15px}
.c1{width:97px;margin-left:0}.c2{width:162px}.c3{width:67px}

/* sidebar */
.app{display:flex;height:1556px;position:relative}
.side{width:336px;flex:none;background:#b2b2b2;position:relative;font-family:Roboto,"Open Sans",sans-serif;font-size:21px;letter-spacing:0;color:#333536;z-index:2;box-shadow:0 0 4px rgba(0,0,0,.12)}
.logo{height:198px;padding:6px 0 0 91px;display:flex;align-items:center;color:#101010;font:600 26px Inter;letter-spacing:-1px}
.logo svg{width:33px;height:40px;stroke:#b2b2b2;stroke-width:1;margin:-12px 8px 0 0}
.logo b{color:#b4943a;font-weight:600}
.acct{margin:0 12px;height:62px;border-radius:9px;background:#9d9ea3;display:flex;align-items:center;padding:0 12px 0 11px}
.acct i{width:38px;height:38px;border-radius:50%;background:#8a8b8d;display:flex;align-items:center;justify-content:center}
.acct i svg{width:22px;height:22px}
.acct div{margin-left:9px;flex:1;line-height:23px;font-size:18px;padding-top:4px}
.acct b{display:block;font-weight:500;color:#20242c}
.acct span{color:#66686d}
.updn{width:18px;height:28px;color:#3f434b}
.srow{display:flex;margin:24px 12px 36px;gap:8px}
.sbox,.bolt{height:42px;border-radius:8px;background:#a7a8aa;display:flex;align-items:center}
.sbox{width:262px;padding:0 7px 0 9px;font-size:19px}
.sbox svg{width:20px;height:20px;stroke-width:2.8;margin-right:8px;color:#33363b}
.sbox kbd{margin-left:auto;width:40px;height:24px;border-radius:4px;background:#909297;color:#15171a;font:18px/24px Inter,"DejaVu Sans";text-align:center}
.bolt{width:42px;justify-content:center}
.bolt svg{width:21px;height:21px;stroke:none}
.menu1 a{display:flex;align-items:center;height:54px;padding-left:26px;font-size:20px}
.menu1 a svg{width:26px;height:26px;margin-right:14px;color:#5a5c5e;stroke-width:1.7}
.menu1 a.en{font-weight:500;font-size:21px}
.menu1 a .fill{fill:#444;stroke:none}.menu1 a .dark{fill:#2e3032}
.menu1 a .ring{width:30px;height:30px;margin:0 12px 0 -2px}
.menu1 a .bold{stroke-width:2.3}
.menu1 a .faint{color:#9ea0a8;width:28px;height:28px;margin-right:12px}
.menu1 a.on{background:#a7a8ab;color:#050505;border-radius:8px}
.menu1 a.on svg{color:#050505;stroke-width:2.2}
.menu1.last{margin-top:98px}
.side hr{border:0;height:1px;background:#9a9b9f;margin:24px 24px}
.fold{position:absolute;left:318px;top:1496px;width:30px;height:30px;border-radius:50%;background:#45936a;display:flex;align-items:center;justify-content:center;color:#17382a}
.fold svg{width:20px;height:20px;stroke-width:3}

/* header */
.main{flex:1;min-width:0;display:flex;flex-direction:column;background:#a4a5a9}
.top{height:135px;background:#b2b2b2;box-shadow:0 2px 4px rgba(0,0,0,.12);display:flex;padding:64px 0 0 25px;font-family:Roboto,"Open Sans",sans-serif;font-size:20px;letter-spacing:0;color:#43484f;position:relative}
.top h1{font-size:25.500px;font-weight:600;line-height:68px;color:#171b22;margin-right:31px}
.top a{height:67px;line-height:68px;margin:0 24px 0 12px}
.top a.on{margin:0 12px 0 0;padding:0 12px;border-bottom:3px solid #3f7cab;color:#3f7cab;font-size:21px}
.cols{flex:1;display:flex;padding:17px 0 12px;min-height:0}

/* inbox navigation */
.boxes{width:333px;padding:12px 24px 0}
.newc{width:285px;height:48px;border-radius:8px;background:#1f3fa2;color:#b6bfd8;display:flex;align-items:center;justify-content:center;gap:14px;font-weight:600;font-size:19.800px;padding:0 0 2px 4px}
.newc svg{width:22px;height:22px}
.find{margin-top:18px;height:48px;border:1px solid #989a9f;border-radius:8px;background:#b2b2b2;display:flex;align-items:center;padding-left:13px;gap:8px;color:#50565f;font-size:20px;box-shadow:0 1px 2px rgba(0,0,0,.1)}
.find svg{width:21px;height:21px;color:#3b424c}
.grp{display:flex;align-items:center;height:50px;margin-top:42px;padding-left:14px}
.grp svg{width:26px;height:26px;margin-left:auto;margin-right:17px;color:#3c424c}
.sub{display:flex;align-items:center;height:51px;padding:0 0 1px 32px;gap:8px}
.sub.heb{height:53px}
.sub svg{width:22px;height:22px;color:#0d1220}
.team{display:flex;align-items:center;height:44px;margin-top:4px;border:2px solid #2a4cae;border-radius:6px;background:#b2b2b2;padding:0 0 1px 12px;color:#1c3c9e}
.internal{display:flex;align-items:center;height:56px;padding:0 0 1px 14px}
.boxes hr{border:0;height:1px;background:#8f9196;margin:6px 0 0}
.views{margin-top:11px;color:#262d3a}
.views svg.info{width:16px;height:16px;margin:0 0 0 8px;color:#75787f}
.views svg:last-child{margin-right:23px}
.create{display:flex;align-items:center;height:46px;padding-left:24px;gap:13px;color:#1c3c9e;font-weight:500}
.create svg{width:14px;height:14px}

/* conversation list */
.list{width:551px;background:#adacb1;border-radius:14px 0 0 14px;border-right:1px solid #9d9ea3;position:relative;display:flex;flex-direction:column}
.lhead{display:flex;align-items:center;height:82px;padding:0 27px 0 28px;gap:19px;color:#2b3440}
.lhead h2{flex:1;font-size:24px;font-weight:600;color:#0d1220}
.lhead svg{width:30px;height:30px}
.ltabs{display:flex;margin:0 24px;height:78px;border-bottom:1px solid #9a9ba0;color:#3b424e;font-size:19.300px}
.ltabs div{flex:1;display:flex;flex-direction:column;align-items:center;position:relative;padding-top:6px}
.ltabs div svg{width:28px;height:28px;color:#3f4653}
.ltabs span{margin-top:10px;line-height:24px;height:24px}
.ltabs b{position:absolute;left:69px;top:-3px;width:27px;height:22px;border-radius:5px;background:#2450a5;color:#bfc8dc;font:600 15px/22px Inter;text-align:center}
.ltabs .on{color:#0d1220;border-bottom:3px solid #2651a8}
.ltabs .on svg{color:#0d1220;margin-top:-1px}
.ltabs .on span{margin-top:9px}
.rows{flex:1;overflow:hidden;margin:0 0 24px 24px;position:relative}
.cb{width:22px;height:22px;border:1.500px solid #777a83;border-radius:4px;background:#b0b0b1;flex:none}
.all{display:flex;align-items:center;height:64px;padding:8px 0 0 24px;gap:12px;color:#2b3440;font-weight:500}
.row{width:480px;height:135px;border-bottom:1px solid #9a9ba0;display:grid;grid-template-columns:22px 11px 36px 25px 1fr auto;grid-template-rows:94px 1fr;padding:0 24px;color:#2b3440;align-items:center}
.row .cb{grid-column:1}
.av{grid-column:3;width:36px;height:36px;border-radius:50%;margin-top:-8px;font-size:16px;line-height:35px;text-align:center;position:relative;color:#3a4253}
.av em,.cav em{position:absolute;left:21px;top:19px;width:27px;height:27px;border-radius:50%;background:#aeaead;display:flex;align-items:center;justify-content:center;color:#4a505a}
.av em svg{width:20px;height:20px}
.av em.fb{color:#2344ad}
.row b{grid-column:5;font-weight:500;white-space:nowrap}
.row time{grid-column:6;font-size:18px;color:#444a58;margin-top:-18px}
.row p{grid-column:1/6;grid-row:2;padding-left:37px;color:#444a58;font-weight:400;white-space:nowrap;align-self:start;margin-top:-16px}
.st{grid-column:6;grid-row:2;width:20px;height:20px;justify-self:end;align-self:start;margin-top:-13px;color:#6d717b}
.st.full{fill:#8d651c;color:#8d651c}
.a1{background:#93a0bd}.a2{background:#8593b9}.a3{background:#a199b6}.a4{background:#9bb27a}.a5{background:#879fba}.a6{background:#7aad9d}.a7{background:#b7959b}
.thumb{position:absolute;left:486px;top:416px;width:12px;height:460px;border-radius:6px;background:#9fa0a3}
.collapse{position:absolute;left:-18px;top:678px;width:36px;height:36px;border-radius:50%;background:#b2b2b2;display:flex;align-items:center;justify-content:center;box-shadow:0 3px 6px rgba(0,0,0,.18)}
.collapse svg{width:18px;height:18px;stroke-width:2.600}

/* chat */
.chat{width:1069px;background:#adacb1;border-radius:0 16px 16px 0;display:flex;flex-direction:column}
.chead{height:84px;border-bottom:1px solid #9d9ea3;display:flex;align-items:center;padding:0 24px}
.cav{width:48px;height:48px;border-radius:50%;background:#b3a3ad;color:#4b4f59;font-size:17px;line-height:48px;text-align:center;position:relative;flex:none}
.chead h3{margin-left:19px;font-size:23.400px;font-weight:500}
.acts{margin-left:auto;display:flex;align-items:center;color:#2b3440;margin-bottom:2px}
.acts svg{width:34px;height:34px;margin-left:26px;stroke-width:1.900}
.acts .sm{width:24px;height:24px;margin-left:12px}
.acts svg:nth-child(3){margin-left:26px}
.feed{flex:1;display:flex;flex-direction:column;align-items:center;width:1069px}
.day{height:35px;border-radius:18px;background:#a8a9aa;display:flex;align-items:center;gap:14px;padding:0 12px 0 14px;color:#2b3440;font-size:20px}
.day svg{width:22px;height:22px}
.d1{margin-top:42px}
.msg{display:flex;width:1069px}
.msg.in{margin-top:25px;padding-left:24px}
.cav em{left:30px;top:21px;width:28px;height:28px;color:#2344ad}
.cav em svg{width:23px;height:23px}
.in .wrap{margin-left:21px}
.bub{background:#a3a5a7;border-radius:16px;padding:13px;width:201px;height:141px;line-height:34px;box-shadow:0 1px 2px rgba(0,0,0,.1);position:relative}
.bub:before{content:"";position:absolute;top:-1px;left:-14px;width:16px;height:18px;background:#a1a3a6;clip-path:polygon(0 0,100% 0,100% 100%)}
.pill{height:41px;border:1px solid #8f93b4;border-radius:21px;background:#a6a8b2;display:flex;align-items:center;padding-left:19px;gap:6px;font-weight:700;font-size:17px;margin-bottom:5px}
.pill svg{width:17px;height:15px}
.bub p{font-weight:400}
.tm{display:flex;align-items:center;height:32px;padding-left:3px;font-size:18px;color:#3d434d;gap:9px}
.tm svg{width:15px;height:15px}
.out{justify-content:flex-end;padding-right:24px}
.out .wrap{margin-right:21px}
.out .bub{background:#a1a4ae}
.out .bub:before{left:auto;right:-12px;width:24px;height:15px;background:#a1a4ae;clip-path:polygon(0 0,100% 0,50% 100%,0 100%)}
.out .tm{justify-content:flex-end;margin-right:-1px}
.out .pill{background:#a5a7b1}
.m2{margin-top:16px}
.m3{margin-top:17px}
.m3 .bub{width:748px;height:171px}
.m3 .long{line-height:33px;font-size:20.700px;white-space:nowrap}
.dl{background:#7fa7ae}
.bot{background:#a39eb5;color:#4930a8;display:flex;align-items:center;justify-content:center}
.bot>svg{width:29px;height:29px}
.d2{margin-top:16px}
.pay{width:555px;height:44px;border-radius:22px;border:1px solid #a3a3a6;background:#b2b2b2;display:flex;align-items:center;padding-left:30px;white-space:pre}
.pay i{font-size:29px;width:36px;color:#262d38}
.pay b{font-weight:600;letter-spacing:-.15px}
.pay span{margin-left:6px}
.pay a{margin:4px 12px 0 13px;color:#1c3c9e;font-size:20px}
.pay time{color:#4a5060;font-size:19.500px}
.p1{margin-top:25px}.p2{margin-top:28px}.p3{margin-top:25px}
.mailcard{width:1020px;height:155px;margin-top:26px;border-radius:8px;background:#b2b2b2;border:1px solid #9fa0a4;overflow:hidden;box-shadow:0 1px 3px rgba(0,0,0,.15)}
.mh{height:57px;background:#a3a4a8;display:flex;align-items:center;padding:0 25px 2px 24px;gap:12px}
.mh b{flex:1;font-weight:500}
.mh svg{width:22px;height:22px}
.mb{display:flex;align-items:center;height:97px;padding:0 24px}
.re{background:#87a3b5}
.re em{background:#b2b2b2;left:28px;top:24px}
.re em svg{width:19px;height:19px}
.mt{margin-left:11px;width:746px;line-height:27px;display:flex;flex-direction:column;white-space:pre}
.mt b{font-weight:500}
.mt span{color:#343a45;letter-spacing:0}
.mb time{font-size:20.800px;color:#343a45}
.rp{width:20px;height:20px;margin-left:15px}
.dt{width:18px;height:18px;margin-left:16px}
.composer{height:62px;margin:0 24px 12px 25px;border:1px solid #90929a;border-radius:6px;background:#b2b2b2;display:flex;align-items:center}
.ch{width:80px;height:60px;border-right:1px solid #90929a;display:flex;align-items:center;gap:4px;padding-left:15px;color:#1c3c9e}
.ch svg{width:25px;height:25px}
.ch svg.sm{width:20px;height:20px;color:#333}
.composer>span{margin-left:7px;color:#555b68;font-size:20px;flex:1}
.mic{width:47px;height:48px;border:1px solid #a2a3a5;border-radius:8px;display:flex;align-items:center;justify-content:center}
.mic svg{width:24px;height:24px}
.sendw{margin-left:14px;width:100px;height:60px;border-left:1px solid #90929a;padding:12px}
.send{width:75px;height:36px;border-radius:8px;background:#6f7fb8;display:flex;align-items:center;color:#9aa5c9;padding-left:11px}
.send svg{width:22px;height:22px}
.more{margin-left:11px;height:36px;border-left:1px solid #8290c0;display:flex;align-items:center;padding-left:6px}
.send svg.sm{width:18px;height:18px}

/* contact details, mostly under the drawer */
.detail{margin-left:19px;flex:1;background:#aaaaac;border-radius:14px 0 0 14px;padding:0 0 0 24px}
.detail h4{font-size:22px;line-height:74px;height:61px}
.detail i{display:block;border:1px solid #9a9b9f;border-radius:10px 0 0 10px;height:245px}
.detail .k2{height:38px;background:#9c9da0;border:0;margin-top:13px}
.detail .k3{height:53px;margin-top:13px}
.detail .k4{height:68px;background:#9fa0a3;margin-top:16px}

/* filter drawer */
.drawer{position:absolute;left:2340px;top:0;width:540px;height:1556px;background:#fff;border-radius:4px 0 0 0;box-shadow:0 0 60px rgba(0,0,0,.22);z-index:5;display:flex;flex-direction:column;color:#3b4558}
.dh{height:61px;border-bottom:1px solid #ccd3dc;display:flex;align-items:center;padding:0 24px 0 15px}
.dh svg{width:24px;height:24px;color:#45526a}
.dh h3{margin-left:16px;font-size:21.600px;color:#121826;flex:1}
.dh a{font-size:19px;font-weight:600;margin-right:24px;color:#45526a}
.dh .x{width:18px;height:18px;stroke-width:3}
.fcard{margin:24px 12px 0;height:199px;border:1px solid #e7eaef;border-radius:18px;background:#f9fafc;padding:12px;position:relative}
.sel{height:54px;border:1px solid #cdd4dd;border-radius:8px;background:#fff;display:flex;align-items:center;justify-content:space-between;padding:0 11px 0 18px;color:#6b7487;font-size:19.700px;box-shadow:0 1px 2px rgba(0,0,0,.05)}
.sel svg{width:22px;height:22px;stroke-width:1.700}
.drop{position:absolute;left:12px;top:71px;width:491px;height:327px;border:1px solid #dbdfe6;border-radius:6px;background:#fff;box-shadow:0 6px 16px rgba(16,24,40,.13);padding:8px 6px;list-style:none;z-index:2}
.drop li{height:39px;line-height:39px;padding-left:7px;border-radius:5px;font-weight:400;letter-spacing:-.12px}
.drop .heb{font-size:20.300px;letter-spacing:0}
.drop .hov{background:#f3f4f8}
.drop .dis{color:#c3c5c9}
.dthumb{position:absolute;left:513px;top:646px;width:15px;height:80px;border-radius:8px;background:#7f7f7f}
.df{margin-top:auto;height:91px;border-top:1px solid #eceff2;display:flex;justify-content:flex-end;align-items:center;gap:19px;padding:0 25px 0 0}
.df button{width:90px;height:54px;border:1px solid #cdd4dd;border-radius:8px;background:#fff;color:#3b4558;font-weight:600;font-size:20px}
.df .pri{width:76px;background:#b2c5fb;border:0;color:#fff}
.cursor{position:absolute;left:86px;top:185px;width:30px;height:42px;z-index:4;filter:drop-shadow(0 2px 2px rgba(0,0,0,.3))}
```
